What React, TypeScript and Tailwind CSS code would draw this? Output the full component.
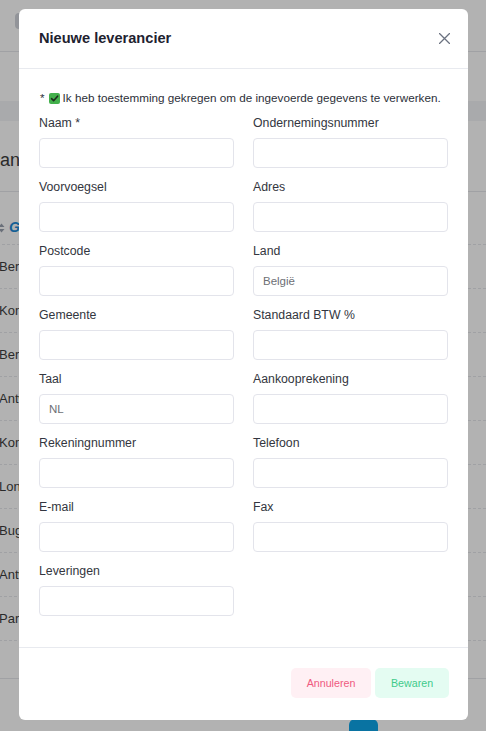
import React from "react";

const fields: { label: string; placeholder?: string }[][] = [
    [{ label: "Naam *" }, { label: "Ondernemingsnummer" }],
    [{ label: "Voorvoegsel" }, { label: "Adres" }],
    [{ label: "Postcode" }, { label: "Land", placeholder: "België" }],
    [{ label: "Gemeente" }, { label: "Standaard BTW %" }],
    [{ label: "Taal", placeholder: "NL" }, { label: "Aankooprekening" }],
    [{ label: "Rekeningnummer" }, { label: "Telefoon" }],
    [{ label: "E-mail" }, { label: "Fax" }],
];

const rows = [
    "Berchem",
    "Kontich",
    "Berchem",
    "Antwerpen",
    "Kontich",
    "Londerzeel",
    "Buggenhout",
    "Antwerpen",
    "Parijs",
];

function Field({ label, placeholder }: { label: string; placeholder?: string }) {
    return (
        <div className="flex flex-col">
            <label className="text-[12.3px] leading-[16px] mb-[7px] text-[#333640]">
                {label}
            </label>
            <input
                placeholder={placeholder}
                className="h-[30px] w-full rounded-[4px] border border-[#e3e4eb] px-[9px] text-[11.5px] outline-none placeholder:text-[#6d6f75]"
            />
        </div>
    );
}

// Page behind the dialog, only its edges are visible
function Background() {
    return (
        <div className="min-h-[731px] bg-white text-[#3d3d3d]">
            <div className="h-[52px] border-b border-gray-200 pt-[13px] pl-[15px]">
                <div className="h-[16px] w-[120px] rounded-[4px] bg-gray-300" />
            </div>
            <div className="mt-[49px] h-[20px] bg-gray-100" />
            <div className="pt-[27px] pb-[19px] border-b border-gray-200">
                <div className="-ml-[45px] text-[18px] leading-[24px]">Leveranciers</div>
            </div>
            <div className="mt-[19px] h-[34px] flex items-center -ml-[3px] gap-[3px] border-b border-dashed border-gray-200">
                <svg width="9" height="10" viewBox="0 0 9 10" className="text-gray-400">
                    <path d="M4.5 0.5 L7.5 4 H1.5 Z M4.5 9.5 L7.5 6 H1.5 Z" fill="currentColor" />
                </svg>
                <span className="text-[14px] font-bold italic text-[#1f8ad6]">Gemeente</span>
            </div>
            {rows.map((r, i) => (
                <div
                    key={i}
                    className="h-[44px] flex items-center text-[13px] border-b border-dashed border-gray-200 last:border-none -ml-[1px]">
                    {r}
                </div>
            ))}
            <div className="h-[38px] border-b border-gray-200" />
            <div className="mt-[40px] ml-[349px] h-[30px] w-[29px] rounded-md bg-[#0ea5e9]" />
        </div>
    );
}

export default function App() {
    return (
        <div className="relative font-['Liberation_Sans',Arial,sans-serif]">
            <Background />
            <div className="fixed inset-0 bg-black/30 pt-[9px] pl-[19px]">
                <div className="w-[449px] rounded-[6px] bg-white">
                    {/* Header */}
                    <div className="h-[60px] flex items-center justify-between pl-[20px] pr-[18px] border-b border-[#e8eaef]">
                        <h3 className="text-[14.6px] font-bold text-[#1e2230] pt-[1px]">
                            Nieuwe leverancier
                        </h3>
                        <button className="text-[#6b7280]">
                            <svg width="11" height="11" viewBox="0 0 11 11">
                                <path
                                    d="M0.5 0.5 L10.5 10.5 M10.5 0.5 L0.5 10.5"
                                    stroke="currentColor"
                                    strokeWidth="1.3"
                                    strokeLinecap="round"
                                />
                            </svg>
                        </button>
                    </div>

                    {/* Body */}
                    <div className="px-[20px] pt-[20px] pb-[31px]">
                        <div className="flex items-center h-[18px] mb-[8px] text-[11.7px] text-[#2d3039]">
                            <span className="ml-[1px]">*</span>
                            <svg width="11" height="11" viewBox="0 0 11 11" className="ml-[4px] mr-[3px]">
                                <rect width="11" height="11" rx="2" fill="#43b04c" />
                                <path
                                    d="M2.6 5.6 L4.6 7.7 L8.6 3.2"
                                    stroke="#1d2a1d"
                                    strokeWidth="1.6"
                                    fill="none"
                                    strokeLinecap="round"
                                    strokeLinejoin="round"
                                />
                            </svg>
                            <span>Ik heb toestemming gekregen om de ingevoerde gegevens te verwerken.</span>
                        </div>
                        <div className="grid grid-cols-2 gap-x-[19px] gap-y-[11px]">
                            {fields.flat().map((f) => (
                                <Field key={f.label} label={f.label} placeholder={f.placeholder} />
                            ))}
                            <Field label="Leveringen" />
                        </div>
                    </div>

                    {/* Footer */}
                    <div className="flex justify-end gap-[4px] border-t border-[#e8eaef] pt-[20px] pb-[22px] pr-[19px]">
                        <button className="h-[30px] w-[80px] rounded-[5px] bg-[#fff0f4] text-[10.7px] text-[#ef5a80]">
                            Annuleren
                        </button>
                        <button className="h-[30px] w-[74px] rounded-[5px] bg-[#e4fcf2] text-[10.7px] text-[#3fcb8b]">
                            Bewaren
                        </button>
                    </div>
                </div>
            </div>
        </div>
    );
}
